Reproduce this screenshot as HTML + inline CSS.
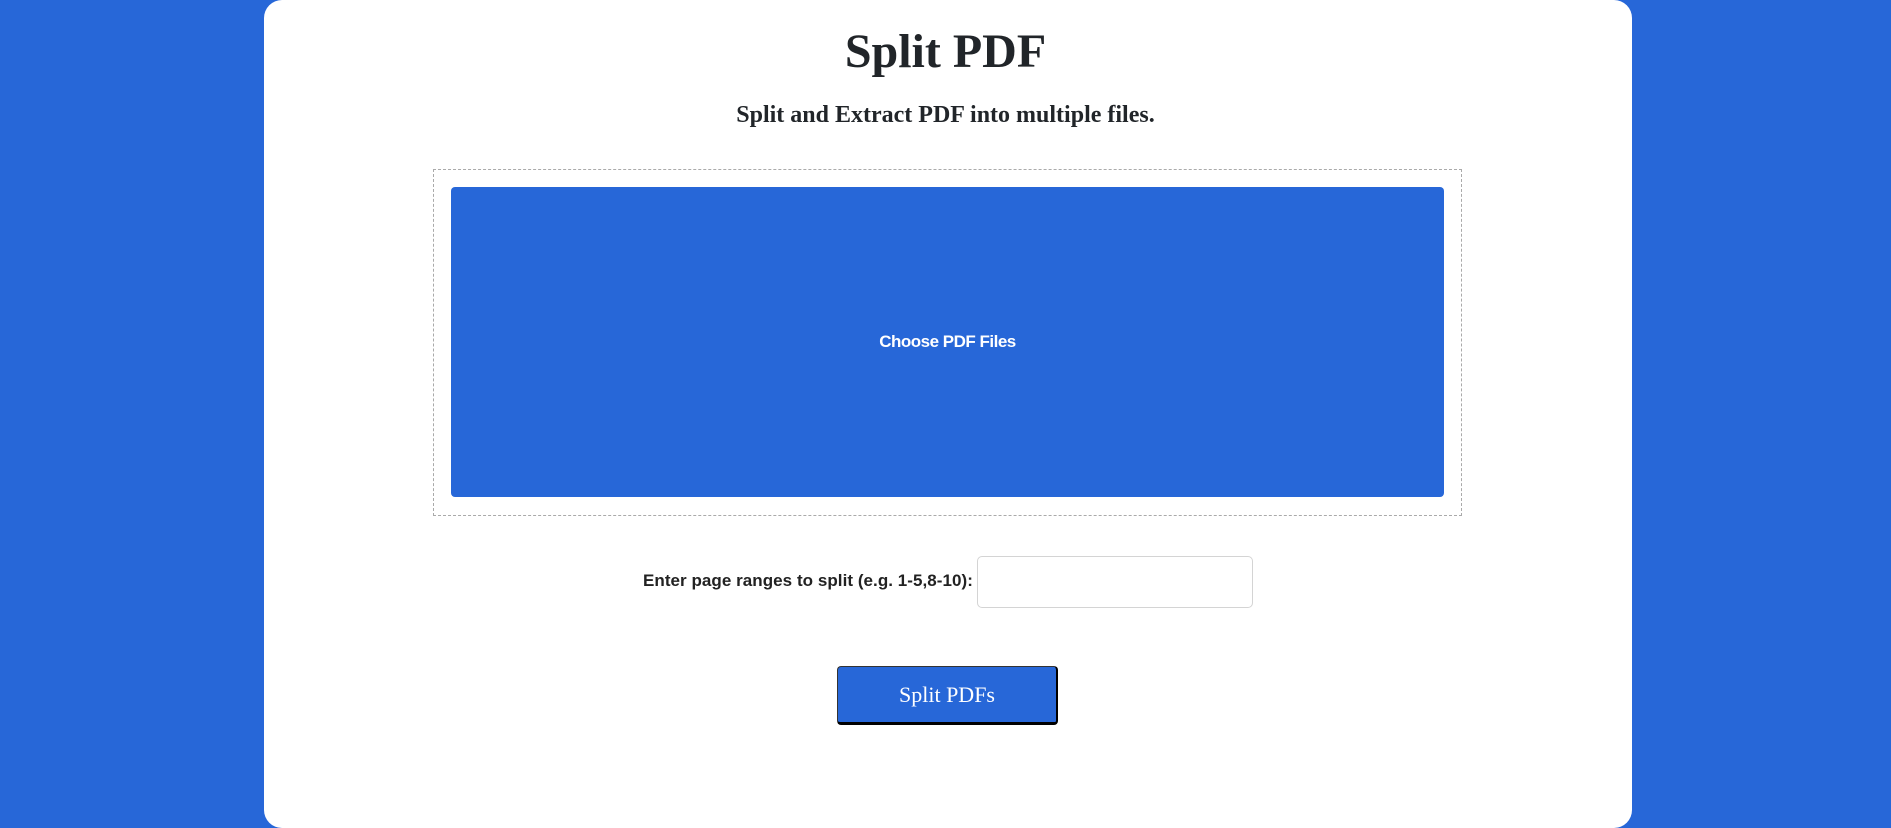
<!DOCTYPE html>
<html><head><meta charset="utf-8"><style>
html,body{margin:0;padding:0}
body{width:1891px;height:828px;background:#2767d8;position:relative;overflow:hidden;font-family:"Liberation Serif",serif}
.card{position:absolute;left:264px;top:0px;width:1368px;height:828px;background:#fff;border-radius:18px}
h1{position:absolute;left:0;width:1891px;top:24px;margin:0;text-align:center;font-size:48px;line-height:56px;font-weight:bold;color:#212529}
.sub{position:absolute;left:0;width:1891px;top:100px;margin:0;text-align:center;font-size:24px;line-height:30px;font-weight:bold;color:#212529}
.dash{position:absolute;left:433px;top:169px;width:1027px;height:345px;border:1px dashed #aaa}
.drop{position:absolute;left:451px;top:187px;width:993px;height:310px;background:#2767d8;border-radius:4px;color:#fff;font-family:"Liberation Sans",sans-serif;font-weight:bold;font-size:17px;display:flex;align-items:center;justify-content:center;letter-spacing:-0.5px}
.label{position:absolute;left:643px;top:570px;font-family:"Liberation Sans",sans-serif;font-weight:bold;font-size:17px;color:#222;letter-spacing:0.05px;line-height:22px;width:340px;white-space:nowrap}
.inp{position:absolute;left:977px;top:556px;width:274px;height:50px;border:1px solid #d4d4d4;border-radius:5px;background:#fff}
.btn{position:absolute;left:837px;top:666px;width:218px;height:55px;background:#2767d8;border:1px solid #333;border-right:2px solid #000;border-bottom:3px solid #000;border-radius:4px;color:#fff;font-size:22px;display:flex;align-items:center;justify-content:center}
</style></head><body>
<div class="card"></div>
<h1>Split PDF</h1>
<div class="sub">Split and Extract PDF into multiple files.</div>
<div class="dash"></div>
<div class="drop">Choose PDF Files</div>
<div class="label">Enter page ranges to split (e.g. 1-5,8-10):</div>
<div class="inp"></div>
<div class="btn">Split PDFs</div>
</body></html>
